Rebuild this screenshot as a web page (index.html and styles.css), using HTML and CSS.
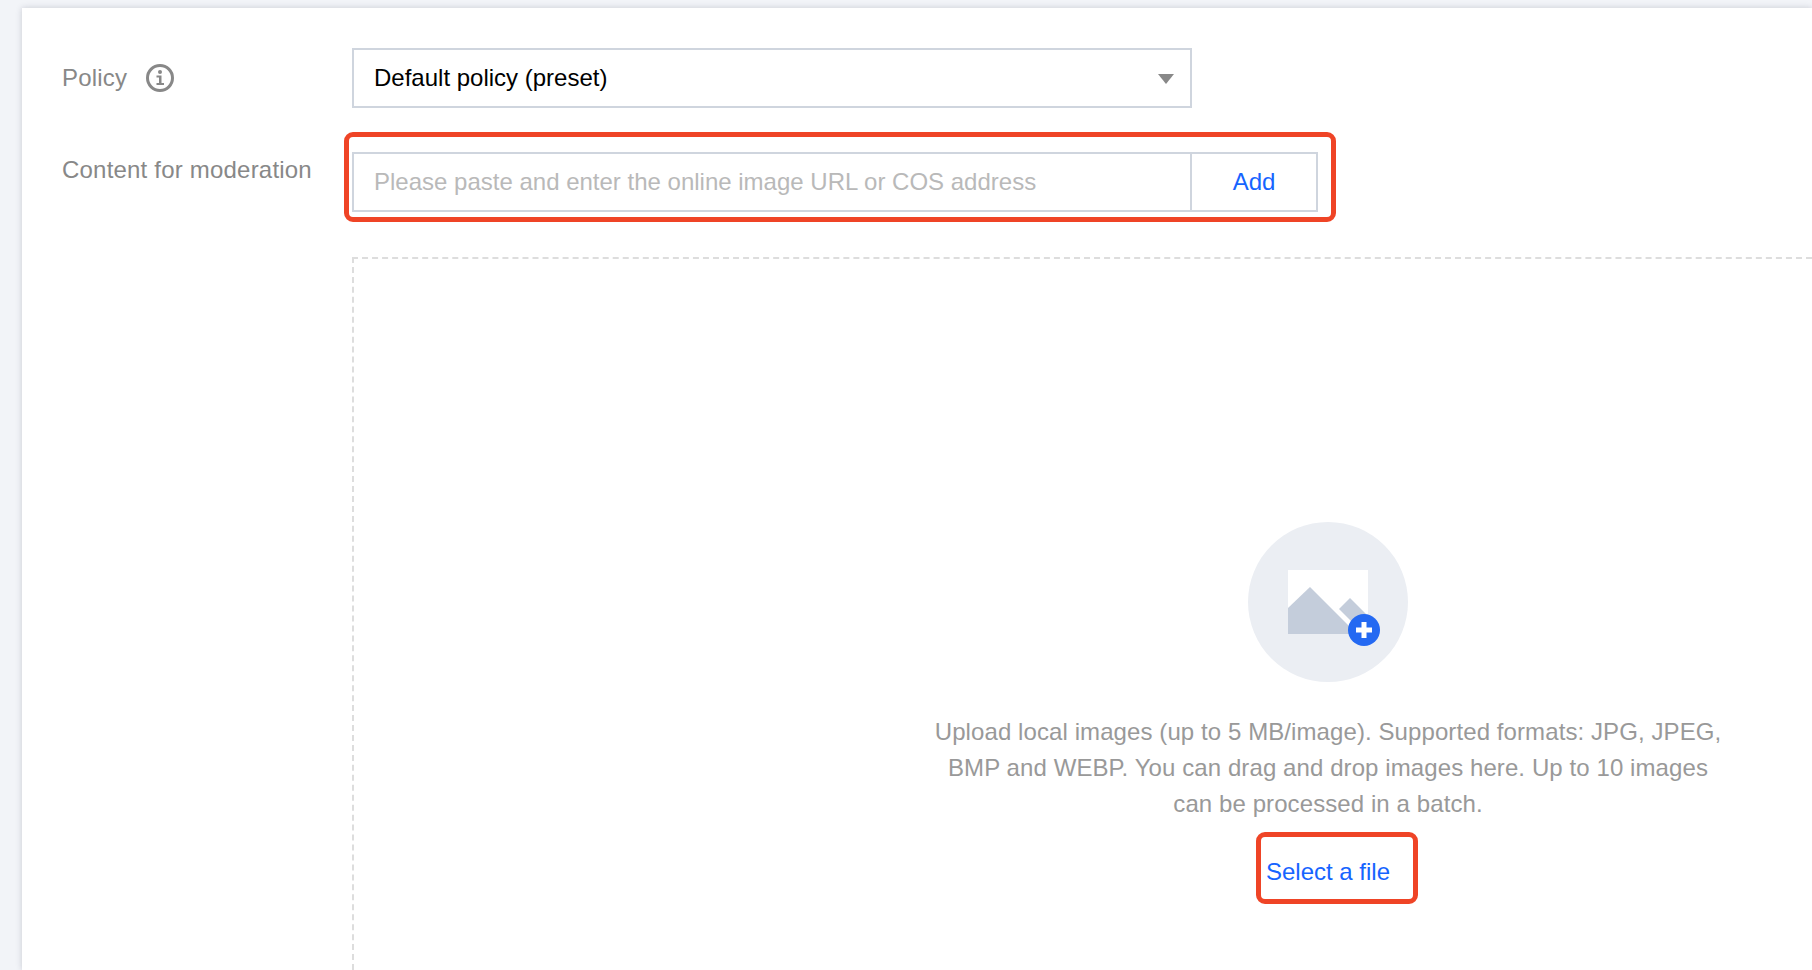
FILE: index.html
```html
<!DOCTYPE html>
<html lang="en">
<head>
<meta charset="utf-8">
<title>Policy</title>
<link rel="stylesheet" href="styles.css">
</head>
<body>
<main class="card">
  <div class="row row-policy">
    <div class="label label-policy">
      <span>Policy</span>
      <svg class="info" viewBox="0 0 30 30" width="30" height="30" aria-hidden="true">
        <circle cx="15" cy="15" r="12.5" fill="none" stroke="#888" stroke-width="3"/>
        <circle cx="15" cy="9" r="2" fill="#888"/>
        <path d="M11.5 12.5H16.500V20H19V22H11.500V20H14V14.500H11.500Z" fill="#888"/>
      </svg>
    </div>
    <div class="select">
      <span>Default policy (preset)</span>
      <span class="caret"></span>
    </div>
  </div>
  <div class="row row-content">
    <div class="label label-content">Content for moderation</div>
    <div class="url-group">
      <div class="url-input">Please paste and enter the online image URL or COS address</div>
      <div class="add">Add</div>
      <div class="mark mark-url"></div>
    </div>
  </div>
  <div class="drop">
    <div class="drop-body">
      <svg class="upload-icon" viewBox="0 0 160 160" width="160" height="160" aria-hidden="true">
        <circle cx="80" cy="80" r="80" fill="#ebeef3"/>
        <rect x="40" y="48" width="80" height="64" fill="#fff"/>
        <path d="M40 86L62 65L109 112H40Z" fill="#c4cddb"/>
        <path d="M91 87L102 76L118 92V101H105Z" fill="#c4cddb"/>
        <circle cx="116" cy="108" r="16" fill="#2469f2"/>
        <path d="M113.500 100H118.500V105.500H124V110.500H118.500V116H113.500V110.500H108V105.500H113.500Z" fill="#fff"/>
      </svg>
      <p class="hint">Upload local images (up to 5 MB/image). Supported formats: JPG, JPEG, BMP and WEBP. You can drag and drop images here. Up to 10 images can be processed in a batch.</p>
      <div class="pick">
        <span>Select a file</span>
        <div class="mark mark-pick"></div>
      </div>
    </div>
  </div>
</main>
</body>
</html>
```
FILE: styles.css
```css
* { box-sizing: border-box; }
html, body { margin: 0; height: 100%; overflow: hidden; }
body {
  background: #f2f4f8;
  font-family: "Liberation Sans", Arial, sans-serif;
  font-size: 24px;
  padding: 8px 0 0 22px;
}
.card {
  height: 100%;
  display: flex;
  flex-direction: column;
  background: #fff;
  box-shadow: 0 0 6px rgba(54, 58, 80, .22);
  padding: 40px 0 0 40px;
}
.row { display: flex; align-items: flex-start; flex: none; }
.label { width: 290px; color: #888; line-height: 36px; flex: none; letter-spacing: .2px; }
.label-policy { display: flex; align-items: center; gap: 18px; padding-top: 12px; }
.info { display: block; }
.select {
  width: 840px;
  height: 60px;
  border: 2px solid #cfd5de;
  display: flex;
  align-items: center;
  justify-content: space-between;
  padding: 0 16px 0 20px;
  color: #000;
}
.caret {
  width: 0;
  height: 0;
  border-left: 8px solid transparent;
  border-right: 8px solid transparent;
  border-top: 10px solid #888;
  margin-top: 1px;
}
.row-content { margin-top: 44px; }
.url-group { position: relative; display: flex; width: 966px; height: 60px; }
.url-input {
  width: 840px;
  border: 2px solid #cfd5de;
  padding: 0 20px;
  line-height: 56px;
  color: #b9b9b9;
}
.add {
  flex: 1;
  border: 2px solid #cfd5de;
  border-left: 0;
  color: #1664ff;
  text-align: center;
  line-height: 56px;
}
.mark {
  position: absolute;
  border: 5px solid #ef4426;
  border-radius: 9px;
  pointer-events: none;
}
.mark-url { top: -20px; bottom: -10px; left: -8px; right: -18px; }
.drop {
  margin: 45px 0 0 290px;
  flex: 1;
  min-height: 0;
  border: 2px dashed #ddd;
  border-width: 2px 0 0 2px;
  display: flex;
  justify-content: flex-start;
  padding-left: 579px;
}
.drop-body {
  width: 790px;
  padding-top: 263px;
  display: flex;
  flex-direction: column;
  align-items: center;
}
.upload-icon { display: block; flex: none; }
.hint {
  margin: 32px 0 0;
  color: #999;
  line-height: 36px;
  text-align: center;
  width: 790px;
  letter-spacing: .09px;
}
.pick {
  position: relative;
  margin-top: 32px;
  line-height: 36px;
  color: #1664ff;
}
.mark-pick { top: -22px; bottom: -14px; left: -10px; right: -28px; }
```
